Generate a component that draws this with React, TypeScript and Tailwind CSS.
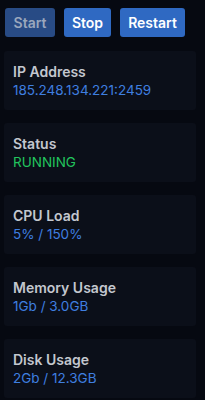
import React from "react";

const stats = [
  { label: "IP Address", value: "185.248.134.221:2459", tone: "text-[#3f7fe0]" },
  { label: "Status", value: "RUNNING", tone: "text-[#22c55e]" },
  { label: "CPU Load", value: "5% / 150%", tone: "text-[#3f7fe0]" },
  { label: "Memory Usage", value: "1Gb / 3.0GB", tone: "text-[#3f7fe0]" },
  { label: "Disk Usage", value: "2Gb / 12.3GB", tone: "text-[#3f7fe0]" },
];

export default function App() {
  return (
    <div className="min-h-[400px] w-[205px] bg-[#060911] font-['Inter',sans-serif]">
      <div className="flex gap-[9px] px-[5px] pt-[8px]">
        <button
          type="button"
          disabled
          className="h-[29px] w-[50px] rounded-[3px] bg-[#284b85] text-[14px] font-semibold text-[#9aa7bd]"
        >
          Start
        </button>
        <button
          type="button"
          className="h-[29px] w-[47px] rounded-[3px] bg-[#2f69c2] text-[14px] font-semibold text-white"
        >
          Stop
        </button>
        <button
          type="button"
          className="h-[29px] w-[65px] rounded-[3px] bg-[#2f69c2] text-[14px] font-semibold text-white"
        >
          Restart
        </button>
      </div>
      <div className="mt-[14px] flex flex-col gap-[13px] pl-[4px] pr-[9px]">
        {stats.map((s) => (
          <div key={s.label} className="h-[59px] rounded-[3px] bg-[#0b0f19] px-[9px] pt-[11px]">
            <p className="text-[14px] font-semibold leading-[19px] text-[#c3c7cf]">{s.label}</p>
            <p className={`text-[13.5px] leading-[19px] ${s.tone}`}>{s.value}</p>
          </div>
        ))}
      </div>
    </div>
  );
}
